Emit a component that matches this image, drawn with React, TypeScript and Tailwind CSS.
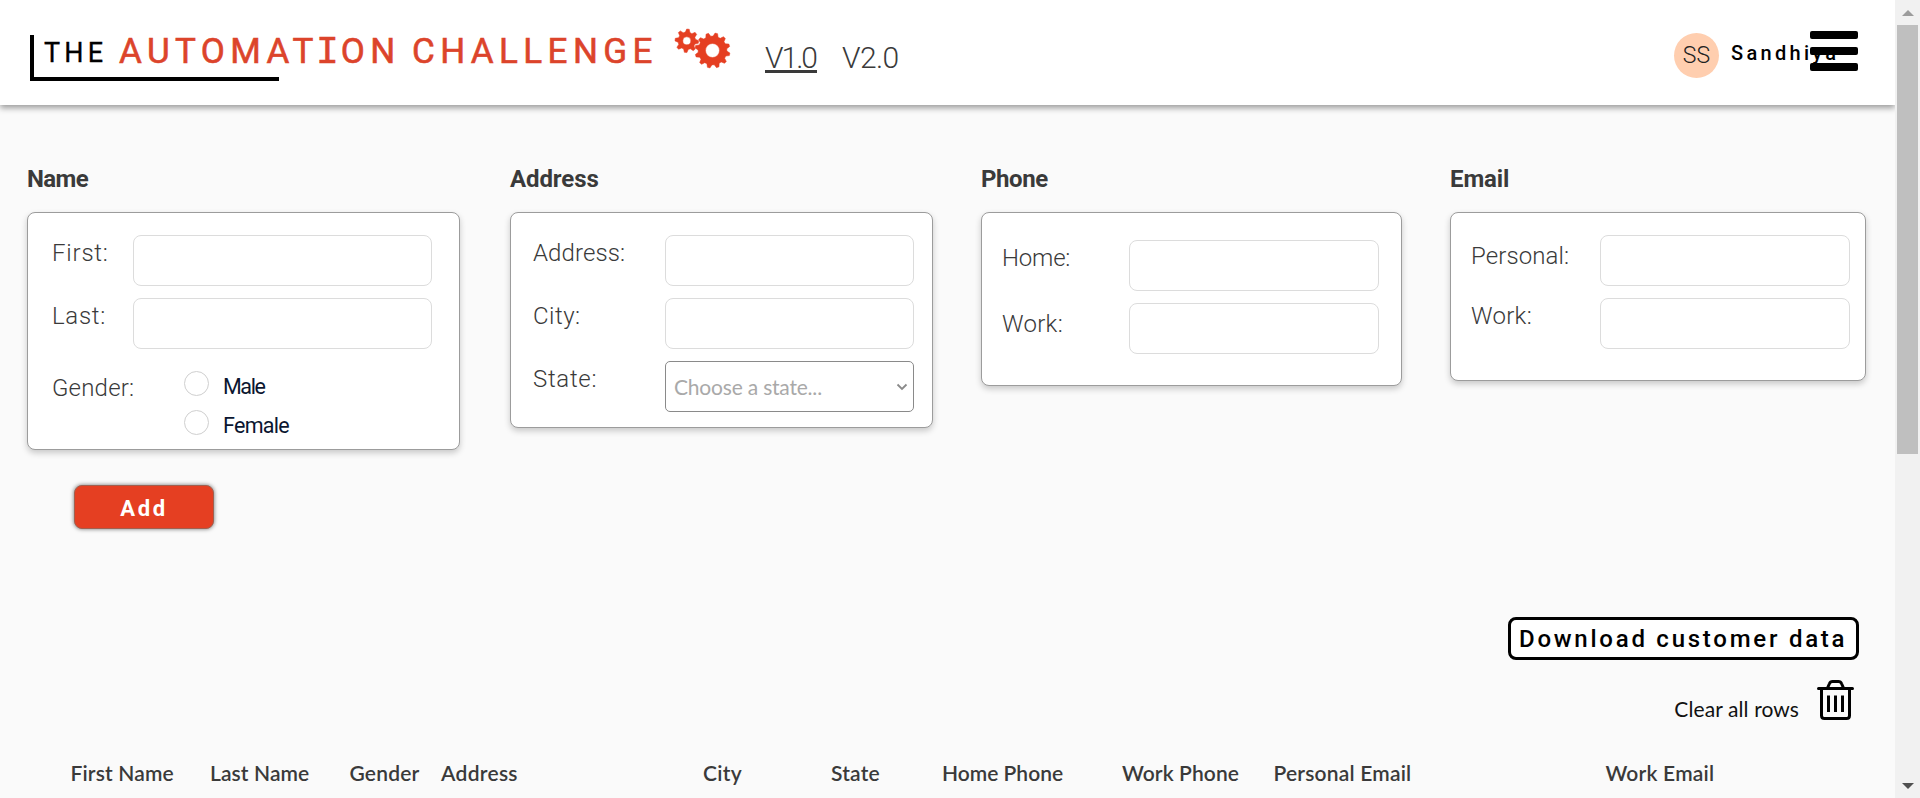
import type { ReactNode } from "react";

const rb = "font-['Roboto',sans-serif]";

function gearPath(cx: number, cy: number, outer: number, inner: number, hole: number, teeth: number, phase: number) {
  const step = (Math.PI * 2) / teeth;
  const pt = (r: number, a: number) => `${(cx + r * Math.cos(a)).toFixed(2)} ${(cy + r * Math.sin(a)).toFixed(2)}`;
  const parts: string[] = [];
  for (let i = 0; i < teeth; i++) {
    const a = phase + i * step;
    parts.push(pt(inner, a - step * 0.34), pt(outer, a - step * 0.14), pt(outer, a + step * 0.14), pt(inner, a + step * 0.34));
  }
  return `M${parts.join("L")}Z M${cx - hole} ${cy}a${hole} ${hole} 0 1 0 ${hole * 2} 0a${hole} ${hole} 0 1 0 ${-hole * 2} 0Z`;
}

function Gears() {
  return (
    <svg className="ml-[20px] mt-[26px] h-[44px] w-[60px] shrink-0" viewBox="0 0 60 44" fill="#e53f22" fillRule="evenodd">
      <path d={gearPath(15.8, 14.8, 11.8, 8.8, 4, 8, 0.1)} stroke="#e53f22" strokeWidth="0.5" strokeLinejoin="round" />
      <path d={gearPath(41.5, 24.5, 17.6, 14.4, 7, 12, 0.22)} stroke="#e53f22" strokeWidth="0.5" strokeLinejoin="round" />
    </svg>
  );
}

function Header() {
  return (
    <header className={`relative z-10 flex h-[105px] w-[1895px] shrink-0 items-start bg-white shadow-[0_3px_6px_rgba(0,0,0,0.38)] ${rb}`}>
      <div className="relative ml-[30px] mt-[35px] flex h-[46px] w-[625px] whitespace-nowrap border-l-4 border-black leading-none">
        <span className="ml-[10px] mt-[4.5px] text-[27px] tracking-[4.2px] text-black [-webkit-text-stroke:0.3px_black]">THE</span>
        <span className="absolute left-[85px] top-[-1.5px] text-[35px] leading-none tracking-[5.4px] text-[#dc442b] [-webkit-text-stroke:0.6px_#dc442b]">
          AUTOMAT
          <span className="font-['Liberation_Mono',monospace] text-[38px] leading-none tracking-[2px] -ml-[3px]">I</span>
          ON
        </span>
        <span className="absolute left-[378px] top-[-1.5px] text-[35px] leading-none tracking-[5.4px] text-[#dc442b] [-webkit-text-stroke:0.6px_#dc442b]">
          CHALLENGE
        </span>
        <span className="absolute bottom-0 left-0 h-1 w-[245px] bg-black" />
      </div>
      <div className="-ml-[4px]">
        <Gears />
      </div>
      <nav className="ml-[34px] mt-[43px] flex text-[30px] font-light leading-none text-[#3a3a3a]">
        <a className="h-[30px] w-[52px] border-b-[3px] border-[#3a3a3a] tracking-[-2px]">V1.0</a>
        <a className="ml-[25px] tracking-[-0.6px]">V2.0</a>
      </nav>
      <div className="absolute left-[1674px] top-[33px] flex h-[45px] items-center">
        <div className="flex size-[45px] items-center justify-center rounded-full bg-[#ffceaf] text-[23px] font-light leading-none text-[#222]">
          SS
        </div>
        <span className="-mt-[5px] ml-[12px] text-[20px] font-medium leading-none tracking-[3.3px] text-black">Sandhiya</span>
      </div>
      <div className="absolute left-[1810px] top-[31px] flex flex-col gap-2">
        <span className="h-2 w-12 rounded-[2px] bg-black" />
        <span className="h-2 w-12 rounded-[2px] bg-black" />
        <span className="h-2 w-12 rounded-[2px] bg-black" />
      </div>
    </header>
  );
}

function Section({ title, track, className, children }: { title: string; track: string; className: string; children: ReactNode }) {
  return (
    <section className={rb}>
      <h2 className={`mb-[21px] text-[24px] font-bold leading-none text-[#3a3a3a] ${track}`}>{title}</h2>
      <div className={`rounded-lg border border-[#9c9c9c] bg-white shadow-[0_3px_6px_rgba(0,0,0,0.2)] ${className}`}>{children}</div>
    </section>
  );
}

function Field({ label, labelClass, inputClass }: { label: string; labelClass: string; inputClass: string }) {
  return (
    <label className="mb-3 flex h-[51px]">
      <span className={`shrink-0 whitespace-nowrap text-[24px] font-light leading-none text-[#3a3a3a] ${labelClass}`}>{label}</span>
      <input className={`h-[51px] shrink-0 rounded-lg border border-[#dcdcdc] bg-white ${inputClass}`} />
    </label>
  );
}

function Radio({ label, track }: { label: string; track: string }) {
  return (
    <label className="flex h-[39px] items-start">
      <span className="size-[25px] rounded-full border border-[#cfcfcf] bg-white" />
      <span className={`ml-[14px] mt-[5px] text-[21.5px] leading-none text-[#0b1630] ${track}`}>{label}</span>
    </label>
  );
}

function CustomerForm() {
  return (
    <div className="flex h-[318px] items-start pl-[27px] pt-[62px]">
      <Section title="Name" track="tracking-[-0.6px]" className="h-[238px] w-[433px] pl-[24px] pt-[22px]">
        <Field label="First:" labelClass="w-[81px] pt-[6px] tracking-[0.8px]" inputClass="w-[299px]" />
        <Field label="Last:" labelClass="w-[81px] pt-[6px] tracking-[0.7px]" inputClass="w-[299px]" />
        <div className="flex pt-[10px]">
          <span className="w-[132px] pt-[5px] text-[24px] font-light leading-none tracking-[0.2px] text-[#3a3a3a]">Gender:</span>
          <div>
            <Radio label="Male" track="tracking-[-1.4px]" />
            <Radio label="Female" track="tracking-[-0.7px]" />
          </div>
        </div>
      </Section>
      <div className="w-[50px]" />
      <Section title="Address" track="tracking-[-0.1px]" className="h-[216px] w-[423px] pl-[22px] pt-[22px]">
        <Field label="Address:" labelClass="w-[132px] pt-[6px] tracking-[0.1px]" inputClass="w-[249px]" />
        <Field label="City:" labelClass="w-[132px] pt-[6px] tracking-[0.5px]" inputClass="w-[249px]" />
        <div className="flex">
          <span className="w-[132px] pt-[6px] text-[24px] font-light leading-none tracking-[0.7px] text-[#3a3a3a]">State:</span>
          <div className="flex h-[51px] w-[249px] items-center justify-between rounded-[5px] border border-[#8a8a8a] bg-white pl-[8px] pr-[5px] font-['Lato',sans-serif] text-[21px] leading-none tracking-[-0.2px] text-[#a9a9a9]">
            Choose a state...
            <svg className="h-[8px] w-[12px]" viewBox="0 0 12 8" fill="none" stroke="#8a8a8a" strokeWidth="1.8">
              <path d="M1.5 1.5 6 6 10.5 1.5" />
            </svg>
          </div>
        </div>
      </Section>
      <div className="w-[48px]" />
      <Section title="Phone" track="tracking-[-0.4px]" className="h-[174px] w-[421px] pl-[20px] pt-[27px]">
        <Field label="Home:" labelClass="w-[127px] pt-[6px] tracking-[-0.2px]" inputClass="w-[250px]" />
        <Field label="Work:" labelClass="w-[127px] pt-[9px] tracking-[0.3px]" inputClass="w-[250px]" />
      </Section>
      <div className="w-[48px]" />
      <Section title="Email" track="tracking-[-0.1px]" className="h-[169px] w-[416px] pl-[20px] pt-[22px]">
        <Field label="Personal:" labelClass="w-[129px] pt-[9px] tracking-[0.1px]" inputClass="w-[250px]" />
        <Field label="Work:" labelClass="w-[129px] pt-[6px] tracking-[0.3px]" inputClass="w-[250px]" />
      </Section>
    </div>
  );
}

function TrashIcon() {
  return (
    <svg className="h-[41px] w-[37px]" viewBox="0 0 37 41" fill="none" stroke="#000" strokeWidth="3" strokeLinecap="round" strokeLinejoin="round">
      <path d="M1.5 8.5H35.5" />
      <path d="M4.5 9V35.5Q4.5 38.5 7.5 38.5H29.5Q32.5 38.5 32.5 35.5V9" />
      <path d="M10.5 8 12.5 3.5Q13.3 1.5 15.5 1.5H21.5Q23.700 1.5 24.5 3.5L26.5 8" />
      <path d="M11.5 15.5V32M18.5 15.5V32M25.5 15.5V32" strokeLinecap="butt" />
    </svg>
  );
}

function Actions() {
  return (
    <>
      <button className={`ml-[74px] mt-[62px] flex h-[44px] w-[140px] items-center justify-center rounded-lg border border-[#a06050] bg-[#e53f22] pt-[3px] text-[22px] font-bold leading-none tracking-[2.7px] text-white shadow-[0_0_4px_rgba(0,0,0,0.55)] ${rb}`}>
        Add
      </button>
      <div className="flex flex-col items-end pr-[36px] pt-[88px]">
        <button className={`flex h-[43px] w-[351px] items-center whitespace-nowrap rounded-lg border-[3px] border-black bg-white pl-[8px] text-[24px] font-medium leading-none tracking-[2.75px] text-black ${rb}`}>
          Download customer data
        </button>
        <div className="flex items-start pr-[5px] pt-[20px]">
          <span className="mr-[18px] mt-[18px] font-['Lato',sans-serif] text-[21px] leading-none tracking-[0.1px] text-[#111]">Clear all rows</span>
          <TrashIcon />
        </div>
      </div>
    </>
  );
}

function TableHead() {
  return (
    <div className="flex whitespace-nowrap pl-[70.5px] pt-[41px] font-['Lato',sans-serif] text-[21px] font-semibold leading-none text-[#3a3a3a]">
      <span className="w-[139.5px] tracking-[0.15px]">First Name</span>
      <span className="w-[139.5px] tracking-[0.1px]">Last Name</span>
      <span className="w-[91.5px] tracking-[0.2px]">Gender</span>
      <span className="w-[262px] tracking-[0.3px]">Address</span>
      <span className="w-[128px] tracking-[0.3px]">City</span>
      <span className="w-[111px] tracking-[0.2px]">State</span>
      <span className="w-[180px] tracking-[0px]">Home Phone</span>
      <span className="w-[151.5px] tracking-[0.1px]">Work Phone</span>
      <span className="w-[332px] tracking-[0.2px]">Personal Email</span>
      <span className="tracking-[0.2px]">Work Email</span>
    </div>
  );
}

function Scrollbar() {
  return (
    <div className="flex h-full w-[25px] shrink-0 flex-col items-center bg-[#f1f1f1]">
      <div className="flex h-[25px] items-center">
        <svg className="h-[6px] w-[12px]" viewBox="0 0 12 6" fill="#9c9c9c"><path d="M6 0 12 6H0Z" /></svg>
      </div>
      <div className="h-[429px] w-[21px] bg-[#bfbfbf]" />
      <div className="mt-auto flex h-[25px] items-center">
        <svg className="h-[6px] w-[12px]" viewBox="0 0 12 6" fill="#505050"><path d="M6 6 0 0H12Z" /></svg>
      </div>
    </div>
  );
}

export default function App() {
  return (
    <div className="flex h-[798px] w-[1920px] overflow-hidden bg-[#fafafa]">
      <div className="flex h-full w-[1895px] shrink-0 flex-col overflow-hidden">
        <Header />
        <main className="min-h-0 flex-1">
          <CustomerForm />
          <Actions />
          <TableHead />
        </main>
      </div>
      <Scrollbar />
    </div>
  );
}
